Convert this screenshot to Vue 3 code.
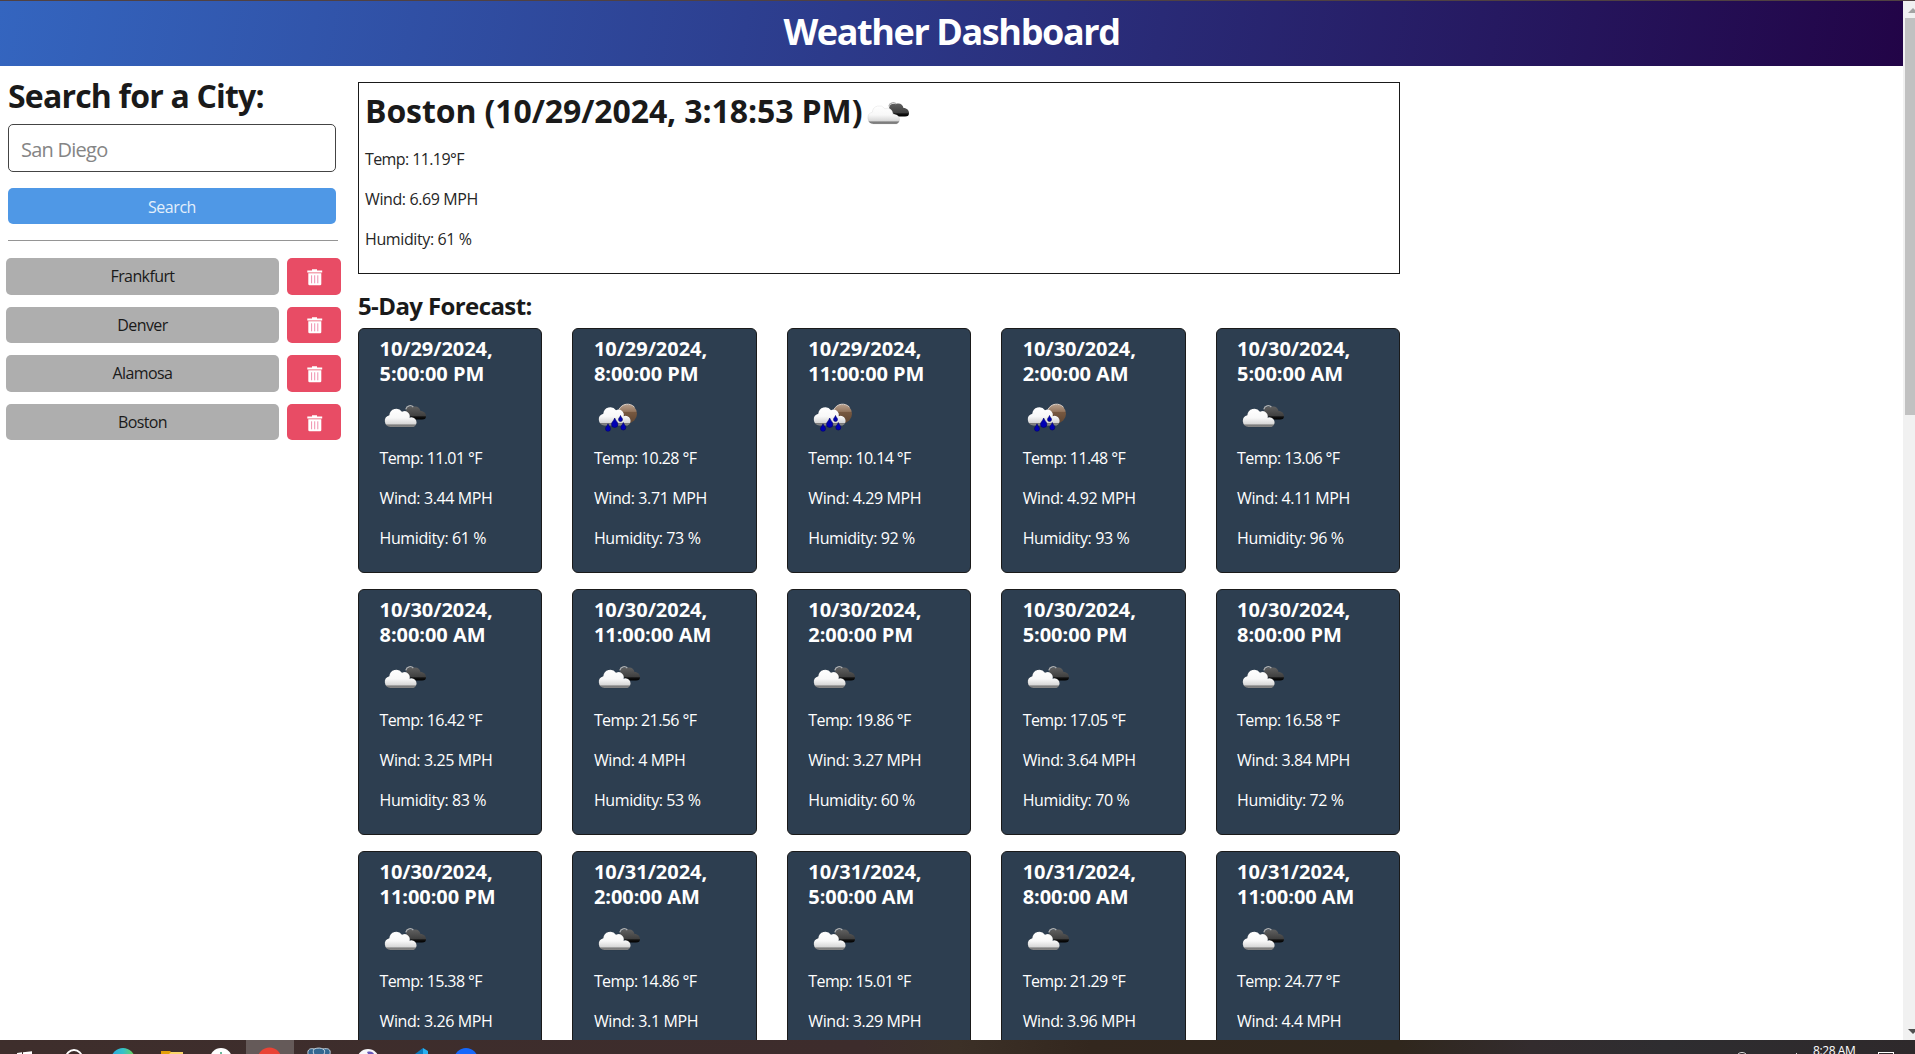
<script setup>
const cities = ['Frankfurt', 'Denver', 'Alamosa', 'Boston']
const forecast = [
  ['10/29/2024,', '5:00:00 PM', 'cloud', '11.01', '3.44', '61'],
  ['10/29/2024,', '8:00:00 PM', 'rain', '10.28', '3.71', '73'],
  ['10/29/2024,', '11:00:00 PM', 'rain', '10.14', '4.29', '92'],
  ['10/30/2024,', '2:00:00 AM', 'rain', '11.48', '4.92', '93'],
  ['10/30/2024,', '5:00:00 AM', 'cloud', '13.06', '4.11', '96'],
  ['10/30/2024,', '8:00:00 AM', 'cloud', '16.42', '3.25', '83'],
  ['10/30/2024,', '11:00:00 AM', 'cloud', '21.56', '4', '53'],
  ['10/30/2024,', '2:00:00 PM', 'cloud', '19.86', '3.27', '60'],
  ['10/30/2024,', '5:00:00 PM', 'cloud', '17.05', '3.64', '70'],
  ['10/30/2024,', '8:00:00 PM', 'cloud', '16.58', '3.84', '72'],
  ['10/30/2024,', '11:00:00 PM', 'cloud', '15.38', '3.26'],
  ['10/31/2024,', '2:00:00 AM', 'cloud', '14.86', '3.1'],
  ['10/31/2024,', '5:00:00 AM', 'cloud', '15.01', '3.29'],
  ['10/31/2024,', '8:00:00 AM', 'cloud', '21.29', '3.96'],
  ['10/31/2024,', '11:00:00 AM', 'cloud', '24.77', '4.4'],
].map(([date, time, icon, temp, wind, humidity]) => ({ date, time, icon, temp, wind, humidity }))
</script>

<template>
  <div class="screen">
    <svg class="defs" width="0" height="0">
      <defs>
        <linearGradient id="white" x1="0" y1="0" x2="0" y2="1">
          <stop offset="0" stop-color="#fff" /><stop offset=".5" stop-color="#f8f8f8" />
          <stop offset=".84" stop-color="#d6d6d6" /><stop offset=".88" stop-color="#777" /><stop offset="1" stop-color="#8c8c8c" />
        </linearGradient>
        <linearGradient id="dark" x1="0" y1="0" x2="0" y2="1">
          <stop offset="0" stop-color="#606060" /><stop offset=".7" stop-color="#404040" />
          <stop offset=".8" stop-color="#111" /><stop offset="1" stop-color="#000" />
        </linearGradient>
        <linearGradient id="moon" x1="0" y1="0" x2="0" y2="1">
          <stop offset="0" stop-color="#b8a08e" /><stop offset=".38" stop-color="#94765e" /><stop offset=".42" stop-color="#775840" /><stop offset="1" stop-color="#5f4632" />
        </linearGradient>
        <symbol id="cloud" viewBox="0 0 50 50">
          <path d="M27 23C24.500 18 28 14.500 33 16c3.500-1.500 7 .5 7.500 4 3.500 0 5.500 2.500 5.500 5 0 2.500-1 3.500-4 3.500h-8z" fill="url(#dark)" />
          <path d="M25.800 18.300c1-4 5.500-4.500 7.500-2.300" stroke="#b0b0b0" fill="none" stroke-width="1.300" />
          <path d="M10.500 36a6 6 0 0 1-1.200-11.800A7 7 0 0 1 22 20.800a5.200 5.200 0 0 1 7.600 5.900A4.900 4.900 0 1 1 33.500 36z" fill="url(#white)" stroke="#000" stroke-opacity=".1" stroke-width=".6" />
        </symbol>
        <symbol id="rain" viewBox="0 0 50 50">
          <circle cx="33.500" cy="22.700" r="9.500" fill="url(#moon)" />
          <path d="M25 18.500A9.500 9.500 0 0 1 40.500 16.200" stroke="#dfd2c8" fill="none" />
          <path d="M10.500 34.500a6 6 0 0 1-1.200-11.800A7 7 0 0 1 22 19.300a5.200 5.200 0 0 1 7.600 5.900A4.900 4.900 0 1 1 33.500 34.500z" fill="url(#white)" />
          <g fill="#0000b4" stroke="#00006a" stroke-width=".6">
            <path d="M20.700 27c1 3 3.200 4 3.200 6.300a3.200 3.200 0 0 1-6.400 0c0-2.300 2.200-3.300 3.200-6.300z" />
            <path d="M14 32.800c.7 2.200 2.500 3.200 2.500 5a2.500 2.500 0 0 1-5 0c0-1.800 1.800-2.800 2.500-5z" />
            <path d="M26.500 24.500c.6 1.800 2 2.600 2 4a2 2 0 0 1-4 0c0-1.400 1.400-2.200 2-4z" />
            <path d="M29.300 31.500c.7 2.200 2.500 3.200 2.500 5a2.500 2.500 0 0 1-5 0c0-1.800 1.800-2.800 2.500-5z" />
          </g>
        </symbol>
      </defs>
    </svg>

    <div class="edge"></div>
    <div class="viewport">
      <div class="page">
        <header><h1>Weather Dashboard</h1></header>
        <div class="columns">
          <aside>
            <h2 class="search-title">Search for a City:</h2>
            <input type="text" placeholder="San Diego" />
            <button class="search">Search</button>
            <hr />
            <div class="history">
              <div v-for="c in cities" :key="c" class="entry">
                <button class="city">{{ c }}</button>
                <button class="remove" :aria-label="'Delete ' + c">
                  <svg width="16" height="17" viewBox="0 0 16 17">
                    <path d="M.3 1.400H5V.3h5v1.100h5.200v2H.3z" fill="#fff" />
                    <path d="M1.300 4.300h13V15a1.300 1.300 0 0 1-1.300 1.300H2.600A1.300 1.300 0 0 1 1.300 15z" fill="#fff" />
                    <path d="M4.600 6.300v8M7.700 6.300v8M10.800 6.300v8" stroke="#f08fae" />
                  </svg>
                </button>
              </div>
            </div>
          </aside>
          <main>
            <section class="today">
              <h2><span class="place">Boston (10/29/2024, 3:18:53 PM)</span><svg class="wx" width="50" height="50"><use href="#cloud" /></svg></h2>
              <p class="temp">Temp: 11.19°F</p>
              <p>Wind: 6.69 MPH</p>
              <p>Humidity: 61 %</p>
            </section>
            <h4 class="forecast-title">5-Day Forecast:</h4>
            <section class="grid">
              <article v-for="(f, i) in forecast" :key="i" class="card">
                <h5>{{ f.date }}<br />{{ f.time }}</h5>
                <svg class="wx" width="50" height="50"><use :href="'#' + f.icon" /></svg>
                <p class="temp">Temp: {{ f.temp }} °F</p>
                <p>Wind: {{ f.wind }} MPH</p>
                <p v-if="f.humidity">Humidity: {{ f.humidity }} %</p>
              </article>
            </section>
          </main>
        </div>
      </div>
      <div class="scrollbar">
        <svg width="12" height="17"><path d="M5 12l5-5 5 5z" fill="#a3a3a3" /></svg>
        <div class="thumb"></div>
        <svg class="down" width="12" height="17"><path d="M5 6h10l-5 5z" fill="#505050" /></svg>
      </div>
    </div>

    <footer class="taskbar">
      <svg class="apps" width="500" height="14">
        <defs><linearGradient id="edge"><stop offset="0" stop-color="#28a8e0" /><stop offset=".5" stop-color="#34c1c9" /><stop offset="1" stop-color="#6fd650" /></linearGradient></defs>
        <path d="M17 13l5-.7V14h-5zM23 12.300l9-1V14h-9z" fill="#fff" />
        <circle cx="74" cy="18" r="8" fill="none" stroke="#fff" stroke-width="2" />
        <circle cx="123" cy="20" r="12" fill="url(#edge)" />
        <path d="M161 11h9l2 2h10v1h-21z" fill="#e3a008" /><path d="M171 12h12v2h-14z" fill="#fbd66b" />
        <circle cx="221" cy="19" r="11" fill="#fff" /><path d="M221 12v2" stroke="#3aa07a" stroke-width="1.500" />
        <rect x="246" width="48" height="14" fill="#655a59" />
        <circle cx="269.500" cy="19.500" r="12" fill="#ea4335" />
        <path d="M308 14c-1-5 3-6 6-5 4-1.500 7-1 9 0 5-1 8 0 7 5" fill="#336791" stroke="#c4d4e0" /><path d="M314 9c-1 2-1 4 0 5M323 9c2 1 2 3 1 5" stroke="#c4d4e0" fill="none" />
        <circle cx="368" cy="20" r="11" fill="#f7f7fa" /><path d="M367 12c4-1 6 0 7 2h-6z" fill="#6757b8" />
        <path d="M415 14l8-6v6z" fill="#0a7abf" /><path d="M423 8l5 3v3h-5z" fill="#29b0f0" />
        <circle cx="466" cy="20" r="12" fill="#1668fb" />
      </svg>
      <div class="tray">
        <svg width="75" height="14"><path d="M3 14c2-2 6-2 8 0" stroke="#ddd" fill="none" /><rect x="61" y="13" width="1" height="1" fill="#ddd" /></svg>
        <span class="clock">8:28 AM</span>
        <svg class="note" width="18" height="14"><rect x=".5" y="12.500" width="15" height="10" fill="none" stroke="#fff" /></svg>
      </div>
    </footer>
  </div>
</template>

<style>
body { margin: 0; overflow: hidden; background: #fff; }
</style>

<style scoped>
* { box-sizing: border-box; }
.screen {
  width: 1915px; height: 1054px; overflow: hidden; display: flex; flex-direction: column;
  font: 400 16px/24px "Open Sans", "Noto Sans", sans-serif; color: #1a1a1a;
}
.defs { position: absolute; }
.edge { height: 1px; flex: none; background: #504142; }
.viewport { height: 1039px; flex: none; display: flex; overflow: hidden; }
.page { width: 1903px; flex: none; overflow: hidden; }
h1, h2, h4, h5, p { margin: 0; }
header { height: 65px; background: linear-gradient(100deg, #3465bf, #220447); }
h1 { color: #fff; font-size: 36px; line-height: 45px; padding-top: 8px; text-align: center; letter-spacing: -1.400px; font-weight: 700; }
.columns { display: flex; align-items: flex-start; }
aside { width: 358px; flex: none; padding: 10px 0 0 8px; }
.search-title { font-size: 32px; line-height: 40px; letter-spacing: -.8px; white-space: nowrap; }
input {
  display: block; width: 328px; height: 48px; margin-top: 8px; padding: 3px 12px 0; border: 1px solid #444; border-radius: 5px;
  font: 400 20px "Open Sans", sans-serif; letter-spacing: -.750px; background: #fff;
}
input::placeholder { color: #858585; opacity: 1; }
button { border: 0; padding: 0; border-radius: 5px; font: 400 16px/24px "Open Sans", sans-serif; }
.search { display: block; width: 328px; height: 36px; margin-top: 16px; padding-top: 1px; background: #4f98e6; color: #e3effb; letter-spacing: -.450px; }
hr { width: 330px; height: 1px; margin: 16px 0 17px; border: 0; background: #959595; }
.history { margin-left: -2px; display: flex; flex-direction: column; gap: 12.100px; }
.entry { display: flex; gap: 8px; height: 36.500px; }
.city { width: 273px; background: #aeaeae; color: #1a1a1a; letter-spacing: -.6px; }
.remove { width: 54px; background: #e84c65; display: flex; align-items: center; justify-content: center; }
.remove svg { margin: 2px 0 0 1px; }
main { width: 1042px; }
.today { height: 192px; margin-top: 16px; padding: 6px; border: 1px solid #1a1a1a; }
.today p { color: #262626; }
.today h2 { display: flex; height: 45px; font-size: 32px; line-height: 43px; letter-spacing: -.1px; font-weight: 700; }
.today .wx { flex: none; margin: -1px 0 0 1px; }
.wx { display: block; overflow: visible; }
p { height: 24px; margin-bottom: 16px; letter-spacing: -.390px; white-space: nowrap; }
.temp { letter-spacing: -.6px; }
.today .temp { margin-top: 13px; }
.forecast-title { margin-top: 17px; font-size: 24px; line-height: 30px; letter-spacing: -.6px; }
.grid { margin-top: 6.600px; display: grid; grid-template-columns: repeat(5, 184.400px); column-gap: 30px; row-gap: 16px; }
.card { height: 245.500px; padding: 7px 0 0 20.500px; border: 1px solid #1a1a1a; border-radius: 6px; background: #2d3e50; color: #fff; }
h5 { font-size: 20px; line-height: 25px; letter-spacing: -.050px; white-space: nowrap; }
.card .wx { margin: 5px 0 5.500px .5px; }
.scrollbar { width: 12px; flex: none; background: #f1f1f1; display: flex; flex-direction: column; }
.scrollbar svg { display: block; }
.thumb { height: 397px; margin-left: 2px; background: #c1c1c1; }
.down { margin-top: auto; }
.taskbar {
  height: 14px; flex: none; overflow: hidden; display: flex; justify-content: space-between;
  background: linear-gradient(90deg, #3e2e2c, #3d2c2c 45%, #3c3027 50%, #33271e 57%, #30271d 73%, #332c2e 80%, #2e2d30 87%, #2e292b);
}
.tray { width: 180px; display: flex; }
.clock { width: 48px; margin-left: 3px; color: #fff; font-size: 12px; line-height: 22px; letter-spacing: -.4px; white-space: nowrap; }
.note { margin-left: 17px; }
</style>
